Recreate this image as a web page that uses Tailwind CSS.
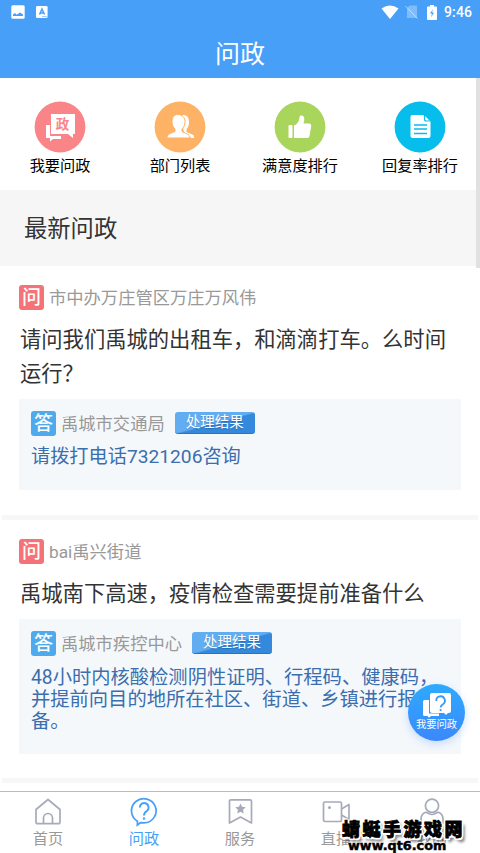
<!DOCTYPE html>
<html lang="zh-CN">
<head>
<meta charset="utf-8">
<meta name="viewport" content="width=device-width, initial-scale=1">
<title>问政</title>
<script src="https://cdn.jsdelivr.net/npm/@tailwindcss/browser@4"></script>
</head>
<body class="bg-white">
<div class="relative flex h-[853px] w-[480px] flex-col overflow-hidden bg-white font-[Roboto,'Noto_Sans_CJK_SC',sans-serif]">
  <header class="h-[78px] shrink-0 bg-[#479ff8] text-white">
    <div class="flex h-6 items-center pl-[11px] pr-2">
      <svg class="h-[14px] w-[14px]" viewBox="0 0 14 14"><rect x=".3" y=".3" width="13.4" height="13.4" rx="1.5" fill="#fff"/><path d="M2 11V9.500l2-1.500 1.700 1.800L9 7.500l3 2V11z" fill="#479ff8"/></svg>
      <svg class="ml-[11px] h-3 w-3" viewBox="0 0 12 12"><rect width="11.600" height="12" rx="1.300" fill="#fff"/><path d="M3.500 8.500L6 3l2.500 5.500M4.500 7h3" fill="none" stroke="#479ff8" stroke-width="1.500"/><path d="M6 10.500h5" stroke="#479ff8" stroke-width=".5"/></svg>
      <svg class="ml-auto h-[14px] w-[18px]" viewBox="0 0 18 14"><path d="M.5 3.500Q9-2.500 17.500 3.500L9 14z" fill="#fff"/></svg>
      <svg class="ml-[6px] h-[14px] w-[13px]" viewBox="0 0 13 14"><path d="M4.500.500H12V13H2V3.500z" fill="#fff" opacity=".3"/><path d="M.5 1l12 12.500" stroke="#fff" stroke-width="1" opacity=".55"/></svg>
      <svg class="ml-[9px] h-[15px] w-[10px]" viewBox="0 0 10 15"><path d="M3 0h4v1.500h2q1 0 1 1V14q0 1-1 1H1q-1 0-1-1V2.500q0-1 1-1h2z" fill="#fff"/><path d="M6 4L3 8.500h2L4 12.500l3-5H5z" fill="#479ff8"/></svg>
      <span class="ml-[7px] text-[14px] font-medium leading-6 tracking-[.1px]">9:46</span>
    </div>
    <h1 class="text-center text-[25px] font-normal leading-[61px]">问政</h1>
  </header>

  <nav class="grid h-[112px] shrink-0 grid-cols-4 pt-[22.500px] text-center text-[15.200px] leading-[27px] text-black">
    <a class="flex flex-col items-center"><svg class="h-[52px] w-[52px]" viewBox="0 0 52 52"><circle cx="26" cy="26" r="25.400" fill="#fa8589"/><path d="M12 24h4v11h11v3h-8l-3 2.500V37h-4z" fill="#fff"/><path d="M17 13h24v20h-2v4l-5-4H17z" fill="#fff"/><text x="28.500" y="28" text-anchor="middle" font-family="Noto Sans CJK SC" font-weight="700" font-size="13.500" fill="#fa8589">政</text></svg><span>我要问政</span></a>
    <a class="flex flex-col items-center"><svg class="h-[52px] w-[52px]" viewBox="0 0 52 52"><circle cx="26" cy="26" r="25.400" fill="#feb265"/><path d="M28 14q7-1 7 7 0 5-2.500 7v3l7 3 .8 3H37q-1-2-5.500-3.500l-2-4Z" fill="#fff"/><path d="M24 13.500c-4 0-6 3-6 7 0 3.500 1.300 6 3 7.500v2.500c-3.500 1.500-8 2.500-8 6.500h23c0-4-5.500-5-8-6.500V28c2-2 3-4 3-7.500 0-4-3-7-7-7Z" fill="#fff" stroke="#feb265" stroke-width="1"/></svg><span>部门列表</span></a>
    <a class="flex flex-col items-center"><svg class="h-[52px] w-[52px]" viewBox="0 0 52 52"><circle cx="26" cy="26" r="25.400" fill="#a9d55d"/><rect x="14.500" y="24" width="4" height="13" rx="1" fill="#fff"/><path d="M20 24.500c3-1 5-4 5.300-7 .2-2.500 1-3 2.200-3 2 0 3 2 2.800 4.500L29.500 22.500H35c1.600 0 2.500 1.300 2.200 3L35.500 35c-.3 1.500-1.200 2-2.500 2H20z" fill="#fff"/></svg><span>满意度排行</span></a>
    <a class="flex flex-col items-center"><svg class="h-[52px] w-[52px]" viewBox="0 0 52 52"><circle cx="26" cy="26" r="25.400" fill="#07bdeb"/><path d="M18.500 14H30l6.500 6.500V35q0 2-2 2h-16q-2 0-2-2V16q0-2 2-2z" fill="#fff"/><path d="M30.500 14v4q0 2 2 2h4" fill="none" stroke="#07bdeb" stroke-width="1.200"/><path d="M20 24h13M20 28h13M20 32.500h13" stroke="#07bdeb" stroke-width="1.300"/></svg><span>回复率排行</span></a>
  </nav>

  <h2 class="h-[76px] shrink-0 bg-[#f6f6f6] pl-6 text-[23.300px] font-normal leading-[79px] text-[#333]">最新问政</h2>

  <main class="h-[525px] shrink-0 overflow-hidden">
    <article class="h-[249px] px-[19px] pt-[19px]">
      <div class="flex h-[25px] items-center gap-[5px] text-[17.300px] text-[#999]"><span class="h-[25px] w-[25px] rounded-[3px] bg-[#f57376] text-center text-[19px] font-medium leading-[26px] text-white">问</span><span class="leading-[27px] pt-px">市中办万庄管区万庄万风伟</span></div>
      <h3 class="mt-[13px] pl-px text-[21.300px] font-normal leading-[33.500px] text-[#333]">请问我们禹城的出租车，和滴滴打车。么时间<br>运行？</h3>
      <section class="mt-[9px] h-[91px] w-[442px] bg-[#f5f8fb] px-3 pt-3">
        <div class="flex h-[25px] items-center text-[17.300px] text-[#999]"><span class="h-[25px] w-[25px] rounded-[3px] bg-[#4eaaec] text-center text-[19px] font-medium leading-[26px] text-white">答</span><span class="ml-[5px] leading-[27px] pt-px">禹城市交通局</span><span class="ml-[10px] h-[22px] w-20 rounded-[3px] border-b border-[#2774c4] bg-linear-165 from-[#62acf1] from-50% to-[#3489dd] to-54% text-center text-[14.500px] leading-[22px] text-white text-shadow-xs -mt-[2px]">处理结果</span></div>
        <p class="mt-[10px] text-[19.200px] leading-[22px] text-[#3b6eae]">请拨打电话7321206咨询</p>
      </section>
    </article>
    <div class="mx-0.5 h-[5px] bg-[#f7f7f7]"></div>
    <article class="h-[258px] px-[19px] pt-[19px]">
      <div class="flex h-[25px] items-center gap-[5px] text-[17.300px] text-[#999]"><span class="h-[25px] w-[25px] rounded-[3px] bg-[#f57376] text-center text-[19px] font-medium leading-[26px] text-white">问</span><span class="leading-[27px] pt-px">bai禹兴街道</span></div>
      <h3 class="mt-[13px] pl-px text-[21.300px] font-normal leading-[33.500px] text-[#333]">禹城南下高速，疫情检查需要提前准备什么</h3>
      <section class="mt-[8.500px] h-[135px] w-[442px] bg-[#f5f8fb] px-3 pt-3">
        <div class="flex h-[25px] items-center text-[17.300px] text-[#999]"><span class="h-[25px] w-[25px] rounded-[3px] bg-[#4eaaec] text-center text-[19px] font-medium leading-[26px] text-white">答</span><span class="ml-[5px] leading-[27px] pt-px">禹城市疾控中心</span><span class="ml-[10px] h-[22px] w-20 rounded-[3px] border-b border-[#2774c4] bg-linear-165 from-[#62acf1] from-50% to-[#3489dd] to-54% text-center text-[14.500px] leading-[22px] text-white text-shadow-xs -mt-[2px]">处理结果</span></div>
        <p class="mt-[10.500px] whitespace-nowrap text-[19.300px] leading-[22px] text-[#3b6eae]">48小时内核酸检测阴性证明、行程码、健康码，<br>并提前向目的地所在社区、街道、乡镇进行报<br>备。</p>
      </section>
    </article>
    <div class="mx-0.5 h-[5px] bg-[#f7f7f7]"></div>
  </main>

  <footer class="grid h-[62px] shrink-0 grid-cols-5 border-t border-[#bbb] bg-white pt-[5px] text-center text-[15.200px] leading-[25px] text-[#999]">
    <a class="flex flex-col items-center"><svg class="h-[30px] w-[30px]" viewBox="0 0 30 30" fill="none" stroke="#a7aabb" stroke-width="1.700" stroke-linejoin="round"><path d="M3 12.500L15 2.500l12 10V25q0 1.700-1.700 1.700H4.700Q3 26.700 3 25zM10.500 26.500V21a4.500 4.500 0 0 1 9 0v5.500"/></svg><span>首页</span></a>
    <a class="flex flex-col items-center text-[#479ff8]"><svg class="h-[30px] w-[30px]" viewBox="0 0 30 30" fill="none" stroke="#479ff8" stroke-width="1.700"><path d="M8.500 24.200A12.300 12.100 0 1 1 15 25.900l-3.500-.2L8.300 28z"/><path d="M10.800 10.500a4.400 4.400 0 1 1 7 3.500Q15 15.800 15 18.500" stroke-width="2"/><circle cx="15" cy="21.500" r=".5"/></svg><span>问政</span></a>
    <a class="flex flex-col items-center"><svg class="h-[30px] w-[30px]" viewBox="0 0 30 30" fill="none" stroke="#a7aabb" stroke-width="1.700" stroke-linejoin="round"><path d="M6 2.800h19q1.500 0 1.500 1.500V26L15.500 20 4.500 26V4.300Q4.500 2.800 6 2.800z"/><path d="M15.500 6.500l1.600 3.300 3.600.5-2.600 2.500.6 3.600-3.200-1.700-3.200 1.700.6-3.600-2.600-2.500 3.600-.5z" fill="#a7aabb" stroke="none"/></svg><span>服务</span></a>
    <a class="flex flex-col items-center"><svg class="h-[30px] w-[30px]" viewBox="0 0 30 30" fill="none" stroke="#a7aabb" stroke-width="1.700" stroke-linejoin="round"><rect x="2.500" y="5" width="18" height="19.500" rx="1.500"/><path d="M20.500 12l7.500-4.500v15L20.500 18"/><circle cx="8.500" cy="10.500" r="1.500" fill="#a7aabb" stroke="none"/></svg><span>直播</span></a>
    <a class="flex flex-col items-center"><svg class="h-[30px] w-[30px]" viewBox="0 0 30 30" fill="none" stroke="#a7aabb" stroke-width="1.700"><circle cx="15" cy="8.800" r="6.600"/><path d="M8 15.500Q4 17.500 4 22v4h22v-4q0-4.500-4-6.500-2-.5-3.500 1-3.500 2-7 0-1.500-1.500-3.500-1z"/></svg><span>我的</span></a>
  </footer>

  <div class="absolute right-0 top-[78px] h-[190px] w-1 bg-[#e1e1e1]"></div>

  <button class="absolute left-[408px] top-[684px] flex h-[57px] w-[57px] flex-col items-center rounded-full bg-linear-to-b from-[#2daaff] to-[#3a88fb] pt-[9px] text-white shadow-[0_3px_9px_#3a88fb40]">
    <svg class="h-[25px] w-[30px] shrink-0" viewBox="0 0 30 25"><path d="M2.500 7H7v13.500h10V23H9l-2 1.800L5.500 23h-3Q1 23 1 21.500v-13Q1 7 2.500 7z" fill="#fff"/><path d="M10 0h17q2 0 2 2v16q0 2-2 2h-1l-2 2-2-2H10q-2 0-2-2V2q0-2 2-2z" fill="#fff"/><path d="M14.300 8a4.300 4.300 0 1 1 6.700 3.200Q18.600 12.500 18.600 14.500" fill="none" stroke="#329aff" stroke-width="1.800"/><circle cx="18.600" cy="17" r="1.100" fill="#329aff"/></svg>
    <span class="whitespace-nowrap text-[10.300px] leading-[14px]">我要问政</span>
  </button>

  <div class="absolute left-[342px] top-[818px] whitespace-nowrap text-black">
    <div class="text-[18px] font-black leading-[24px] tracking-[2.500px] [-webkit-text-stroke:.8px_black] [text-shadow:2px_0_0_#fff,-2px_0_0_#fff,0_2px_0_#fff,0_-2px_0_#fff,1.500px_1.500px_0_#fff,-1.500px_-1.500px_0_#fff,1.500px_-1.500px_0_#fff,-1.500px_1.500px_0_#fff,3px_4px_3px_#0009]">蜻蜓手游戏网</div>
    <div class="-mt-[8px] ml-[6px] font-['DejaVu_Sans'] text-[12.800px] font-bold leading-[24px] [-webkit-text-stroke:.5px_black] [text-shadow:1px_0_0_#fff,-1px_0_0_#fff,0_1px_0_#fff,0_-1px_0_#fff]">www.qt6.com</div>
  </div>
</div>
</body>
</html>
